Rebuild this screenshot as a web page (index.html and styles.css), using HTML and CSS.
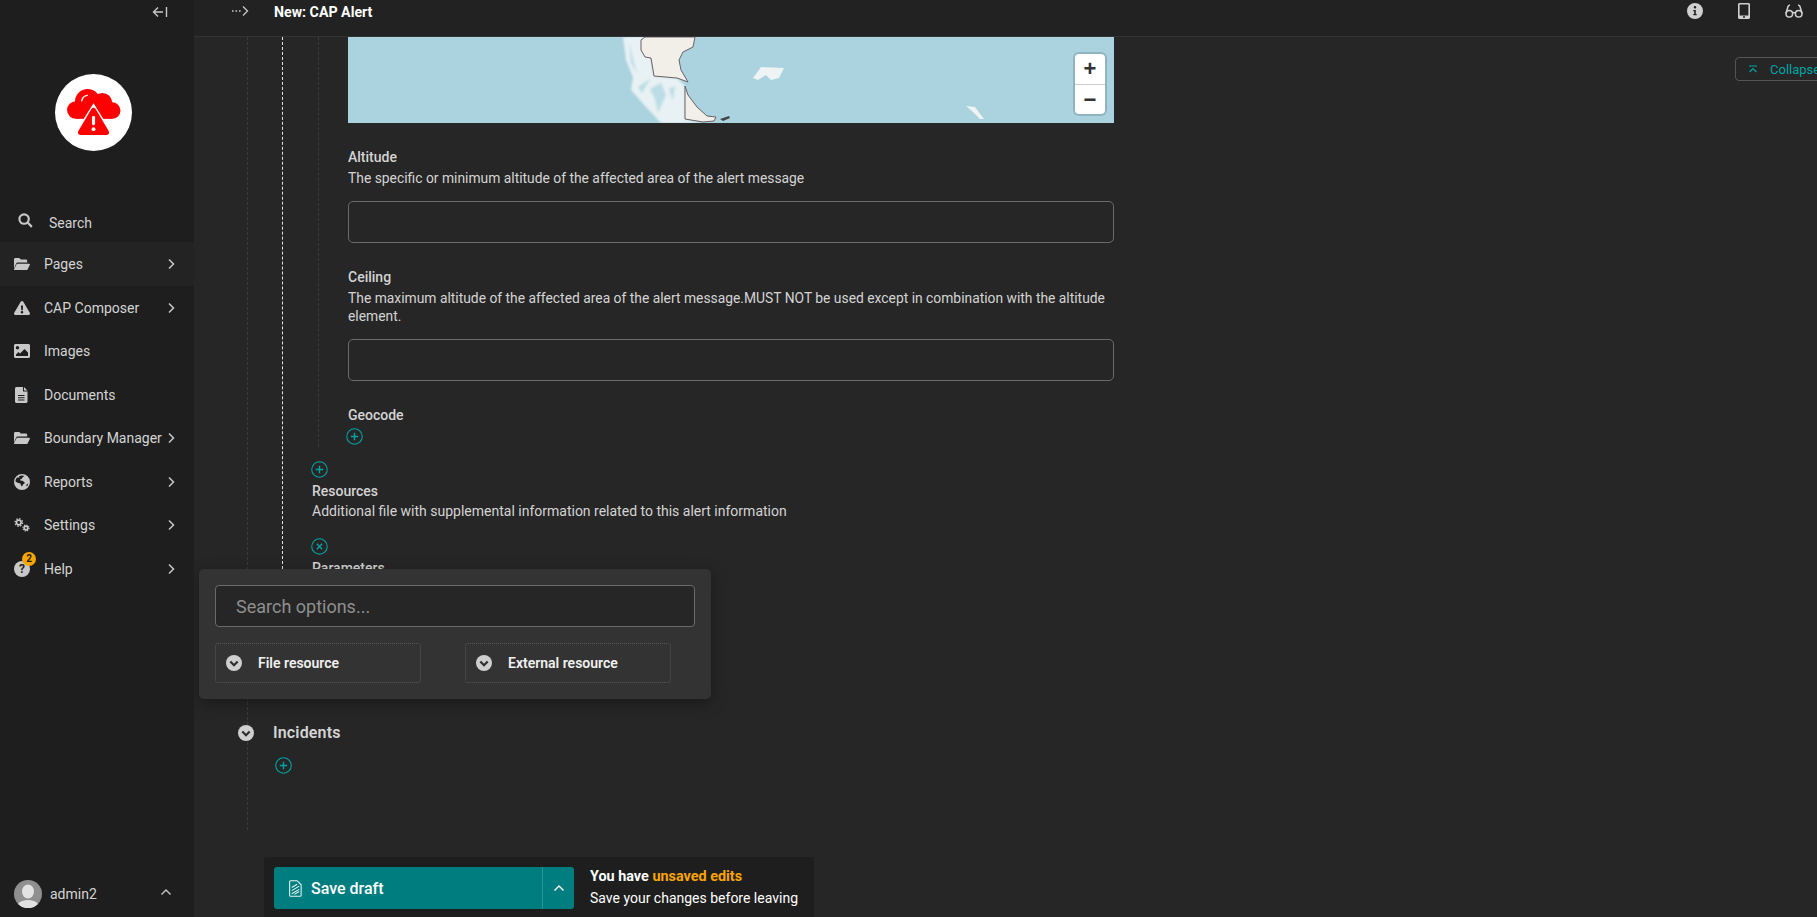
FILE: index.html
```html
<!DOCTYPE html>
<html lang="en">
<head>
<meta charset="utf-8">
<title>New: CAP Alert</title>
<link rel="stylesheet" href="styles.css">
</head>
<body>
<div class="app">
  <aside class="sidebar">
    <div class="side-toggle">
      <svg class="i-toggle" viewBox="0 0 16 12"><path d="M6 1.500 1.500 6 6 10.500M1.500 6H11M14.500 1v10"/></svg>
    </div>
    <div class="logo">
      <svg viewBox="0 0 56 48" class="logo-svg">
        <circle class="logo-red" cx="9" cy="21.500" r="9"/>
        <circle class="logo-red" cx="21" cy="13" r="13"/>
        <circle class="logo-red" cx="36" cy="14" r="10"/>
        <circle class="logo-red" cx="46" cy="22" r="8.500"/>
        <rect class="logo-red" x="9" y="15" width="37" height="15.500"/>
        <path class="logo-cut" d="M15 12c.5-3 2.500-5 5.500-5.500" />
        <path class="logo-tri-bg" d="M27 14.500 6 48h42Z"/>
        <path class="logo-red" d="M24.500 21 11.500 43c-1 2 0 4 2 4h27c2 0 3-2 2-4L29.500 21c-1.300-2.300-3.700-2.300-5 0Z"/>
        <rect class="logo-white" x="25.400" y="27.500" width="3.200" height="9.500" rx="1.500"/>
        <circle class="logo-white" cx="27" cy="41" r="2"/>
      </svg>
    </div>
    <div class="search-row">
      <svg class="i-search" viewBox="0 0 16 16"><circle cx="6.500" cy="6.500" r="5"/><path d="m10.500 10.500 4.300 4.300"/></svg>
      <span>Search</span>
    </div>
    <nav class="nav">
      <a class="nav-item active">
        <svg class="ic" viewBox="0 0 16 13"><path d="M0 11V2C0 1 .6.500 1.500.500h3.800l1.500 1.500h5c.8 0 1.400.6 1.400 1.400V5H4c-1 0-1.600.4-2 1.200Z"/><path d="M2.800 6.200h12.300c.7 0 1 .6.700 1.200l-2.200 4.600c-.2.400-.6.600-1 .6H.8c-.6 0-.9-.5-.7-1Z"/></svg>
        <span class="nav-label">Pages</span>
        <svg class="chev" viewBox="0 0 8 12"><path d="m2 1.500 4.500 4.500L2 10.500"/></svg>
      </a>
      <a class="nav-item">
        <svg class="ic" viewBox="0 0 16 14"><path fill-rule="evenodd" d="M8 0c.5 0 1 .3 1.300.8l6.500 11c.5 1-.2 2.200-1.300 2.200h-13C.4 14-.3 12.800.2 11.800l6.500-11C7 .3 7.500 0 8 0ZM7 4.500l.2 4.800h1.600L9 4.500ZM8 10a1.300 1.300 0 1 0 0 2.600A1.300 1.300 0 0 0 8 10Z"/></svg>
        <span class="nav-label">CAP Composer</span>
        <svg class="chev" viewBox="0 0 8 12"><path d="m2 1.500 4.500 4.500L2 10.500"/></svg>
      </a>
      <a class="nav-item">
        <svg class="ic" viewBox="0 0 16 14"><path fill-rule="evenodd" d="M1.500 0h13C15.300 0 16 .7 16 1.500v11c0 .8-.7 1.500-1.500 1.500h-13C.7 14 0 13.300 0 12.500v-11C0 .7.700 0 1.500 0Zm2 2a1.700 1.700 0 1 0 0 3.400 1.700 1.700 0 0 0 0-3.400ZM2 12h12V8.500L10.500 5 6 9.500 4.500 8 2 10.500Z"/></svg>
        <span class="nav-label">Images</span>
      </a>
      <a class="nav-item">
        <svg class="ic" viewBox="0 0 16 16"><path fill-rule="evenodd" d="M2.500 0H9v4.500h4.500v10c0 .8-.7 1.500-1.500 1.500H2.500C1.700 16 1 15.300 1 14.500v-13C1 .7 1.700 0 2.500 0ZM10 0l3.500 3.500H10ZM4 8v1h6.500V8Zm0 2.200v1h6.500v-1Zm0 2.200v1h6.500v-1Z"/></svg>
        <span class="nav-label">Documents</span>
      </a>
      <a class="nav-item">
        <svg class="ic" viewBox="0 0 16 13"><path d="M0 11V2C0 1 .6.500 1.500.500h3.800l1.500 1.500h5c.8 0 1.400.6 1.400 1.400V5H4c-1 0-1.600.4-2 1.200Z"/><path d="M2.800 6.200h12.300c.7 0 1 .6.700 1.200l-2.200 4.600c-.2.400-.6.600-1 .6H.8c-.6 0-.9-.5-.7-1Z"/></svg>
        <span class="nav-label">Boundary Manager</span>
        <svg class="chev" viewBox="0 0 8 12"><path d="m2 1.500 4.500 4.500L2 10.500"/></svg>
      </a>
      <a class="nav-item">
        <svg class="ic" viewBox="0 0 16 16"><path fill-rule="evenodd" d="M8 0a8 8 0 1 1 0 16A8 8 0 0 1 8 0ZM3 3.500C2 4.600 1.500 6 1.500 7.500L4 9l2.500.5.500 2 1 1 1-2 2-1.500-2-2-2.500-.5-.5-1 1.500-.5L9 3l1.500-1A6.500 6.500 0 0 0 5 2.200L5.500 3.500ZM12 11l1 1.500a6.500 6.500 0 0 0 1.300-3Z"/></svg>
        <span class="nav-label">Reports</span>
        <svg class="chev" viewBox="0 0 8 12"><path d="m2 1.500 4.500 4.500L2 10.500"/></svg>
      </a>
      <a class="nav-item">
        <svg class="ic" viewBox="0 0 16 14"><g class="gear"><circle cx="4.800" cy="4.500" r="2.300" class="gear-ring"/><circle cx="4.800" cy="4.500" r="3.700" class="gear-teeth"/></g><g class="gear"><circle cx="12" cy="10" r="1.800" class="gear-ring"/><circle cx="12" cy="10" r="3" class="gear-teeth small"/></g></svg>
        <span class="nav-label">Settings</span>
        <svg class="chev" viewBox="0 0 8 12"><path d="m2 1.500 4.500 4.500L2 10.500"/></svg>
      </a>
      <a class="nav-item">
        <span class="help-wrap">
          <svg class="ic" viewBox="0 0 16 16"><circle cx="8" cy="8" r="8"/><text x="8" y="12" class="q">?</text></svg>
          <span class="badge">2</span>
        </span>
        <span class="nav-label">Help</span>
        <svg class="chev" viewBox="0 0 8 12"><path d="m2 1.500 4.500 4.500L2 10.500"/></svg>
      </a>
    </nav>
    <div class="account">
      <svg class="avatar" viewBox="0 0 28 28"><circle cx="14" cy="14" r="14" class="av-bg"/><ellipse cx="14" cy="11.500" rx="6" ry="7" class="av-fg"/><path d="M4 24c2-3 6-4 10-4s8 1 10 4a14 14 0 0 1-20 0Z" class="av-fg"/></svg>
      <span class="account-name">admin2</span>
      <svg class="chev-up" viewBox="0 0 12 8"><path d="M1.500 6.500 6 2l4.500 4.500"/></svg>
    </div>
  </aside>

  <main class="main">
    <header class="topbar">
      <svg class="i-more" viewBox="0 0 18 12"><path class="dots" d="M1 6h1.600M4.500 6h1.600M8 6h1.600"/><path class="arr" d="m12 1.500 4.500 4.500-4.500 4.500"/></svg>
      <h1 class="title">New: CAP Alert</h1>
      <div class="top-actions">
        <svg class="top-ic" viewBox="0 0 16 16"><path fill-rule="evenodd" d="M8 0a8 8 0 1 1 0 16A8 8 0 0 1 8 0Zm0 3a1.300 1.300 0 1 0 0 2.600A1.300 1.300 0 0 0 8 3ZM6.300 7v1.200h.9v2.900h-.9v1.200h3.400v-1.200h-.9V7Z"/></svg>
        <svg class="top-ic" viewBox="0 0 16 16"><path fill-rule="evenodd" d="M3.500 0h9C13.300 0 14 .7 14 1.500v13c0 .8-.7 1.500-1.500 1.500h-9C2.700 16 2 15.300 2 14.500v-13C2 .7 2.700 0 3.500 0ZM3.600 1.600v10.800h8.800V1.600ZM8 12.900a1 1 0 1 0 0 2 1 1 0 0 0 0-2Z"/></svg>
        <svg class="top-ic glasses" viewBox="0 0 18 16"><circle cx="4.300" cy="10.800" r="3.300"/><circle cx="13.700" cy="10.800" r="3.300"/><path d="M7.500 10c1-.6 2-.6 3 0M1 10.500 3 3.500C3.300 2.500 4 2 5 2.200M17 10.500l-2-7c-.3-1-1-1.500-2-1.300"/></svg>
      </div>
    </header>

    <div class="content">
      <div class="rail-outer">
        <div class="rail-white">
          <div class="rail-inner">
            <div class="map">
              <svg class="map-svg" viewBox="0 0 766 86" preserveAspectRatio="none">
                <path class="fjord" d="M275 0H297L293 13 303 21 306 39 329 41 337 49 337 82 355 86H313L298 70 283 53 285 40 278 23Z"/>
                <path class="fjord-water" d="M281 6l4 16 4 14-6-10ZM302 52l11-6 5 12-8 18-3-14ZM290 50l12-8-8 14ZM321 52l6-3-2 14Z"/>
                <path class="land" d="M297 0H347L345 10 335 15 331 23 333 33 340 45 329 41 306 39 303 21 297 20 293 13 293 3Z"/>
                <path class="land" d="M337 49 340 58 349 70 359 79 368 80 366 84 355 85 337 82Z"/>
                <path class="island" d="M405 41 413 30 436 31 431 41 423 43 418 38 410 43Z"/>
                <path class="island" d="M618 69 627 70 636 82 632 82 625 75Z"/>
                <path class="islet" d="M372 82 381 79 382 81 375 84Z"/>
              </svg>
              <div class="zoom-ctl">
                <span class="zoom-btn">+</span>
                <span class="zoom-btn minus">−</span>
              </div>
            </div>

            <section class="field">
              <h3 class="f-label">Altitude</h3>
              <p class="f-help">The specific or minimum altitude of the affected area of the alert message</p>
              <input class="f-input" type="text">
            </section>

            <section class="field">
              <h3 class="f-label">Ceiling</h3>
              <p class="f-help">The maximum altitude of the affected area of the alert message.MUST NOT be used except in combination with the altitude element.</p>
              <input class="f-input" type="text">
            </section>

            <section class="field">
              <h3 class="f-label">Geocode</h3>
              <svg class="add geo-add" viewBox="0 0 16 16"><circle cx="8" cy="8" r="7.300"/><path d="M8 4.500v7M4.500 8h7"/></svg>
            </section>
          </div>

          <div class="block">
            <svg class="add" viewBox="0 0 16 16"><circle cx="8" cy="8" r="7.300"/><path d="M8 4.500v7M4.500 8h7"/></svg>
            <h3 class="f-label res-label">Resources</h3>
            <p class="f-help res-help">Additional file with supplemental information related to this alert information</p>
            <svg class="add close-add" viewBox="0 0 16 16"><circle cx="8" cy="8" r="7.300"/><path d="m5.500 5.500 5 5M10.500 5.500l-5 5"/></svg>
            <h3 class="f-label res-label">Parameters</h3>
          </div>
        </div>

        <div class="incidents">
          <div class="inc-head">
            <svg class="toggle-dot" viewBox="0 0 16 16"><circle cx="8" cy="8" r="8" class="dot-bg"/><path d="m4.300 6.500 3.700 3.700 3.700-3.700" class="dot-chev"/></svg>
            <h2 class="inc-title">Incidents</h2>
          </div>
          <svg class="add inc-add" viewBox="0 0 16 16"><circle cx="8" cy="8" r="7.300"/><path d="M8 4.500v7M4.500 8h7"/></svg>
        </div>
      </div>
    </div>

    <button class="collapse" type="button">
      <svg class="col-ic" viewBox="0 0 10 8"><path d="M1 1h8M1.500 7 5 3.500 8.500 7"/></svg>
      <span>Collapse</span>
    </button>

    <div class="chooser">
      <input class="chooser-search" type="text" placeholder="Search options...">
      <div class="chooser-options">
        <div class="opt">
          <svg class="toggle-dot" viewBox="0 0 16 16"><circle cx="8" cy="8" r="8" class="dot-bg"/><path d="m4.300 6.500 3.700 3.700 3.700-3.700" class="dot-chev"/></svg>
          <span>File resource</span>
        </div>
        <div class="opt">
          <svg class="toggle-dot" viewBox="0 0 16 16"><circle cx="8" cy="8" r="8" class="dot-bg"/><path d="m4.300 6.500 3.700 3.700 3.700-3.700" class="dot-chev"/></svg>
          <span>External resource</span>
        </div>
      </div>
    </div>

    <div class="savebar">
      <div class="save-btn">
        <span class="save-main">
          <svg class="save-ic" viewBox="0 0 12 16"><path d="M1.500.7h6l3.800 3.800v9.800c0 .6-.4 1-1 1H1.500c-.6 0-1-.4-1-1V1.700c0-.6.400-1 1-1Z"/><path d="m2.500 7 5-3M2.500 10l7-4.200M2.500 13l7-4.200M5 13.500l4.500-2.700"/></svg>
          <span>Save draft</span>
        </span>
        <span class="save-more"><svg class="chev-up white" viewBox="0 0 12 8"><path d="M1.500 6.500 6 2l4.500 4.500"/></svg></span>
      </div>
      <div class="save-msg">
        <div class="save-l1">You have <em>unsaved edits</em></div>
        <div class="save-l2">Save your changes before leaving</div>
      </div>
    </div>
  </main>
</div>
</body>
</html>
```
FILE: styles.css
```css
* { box-sizing: border-box; }
html, body { margin: 0; height: 100%; overflow: hidden; }
body { font-family: Roboto, "Noto Sans", sans-serif; font-size: 14px; background: #262626; color: #d4d4d4; }
.app { display: flex; height: 917px; }

.sidebar { width: 194px; flex: none; background: #1e1e1e; display: flex; flex-direction: column; }
.side-toggle { height: 24px; display: flex; justify-content: flex-end; align-items: center; padding-right: 26px; }
.i-toggle { width: 16px; height: 12px; fill: none; stroke: #c8c8c8; stroke-width: 1.400; }
.logo { height: 176px; display: flex; align-items: center; justify-content: center; padding-right: 7px; position: relative; }
.logo::before { content: ""; width: 77px; height: 77px; border-radius: 50%; background: #fff; }
.logo-svg { width: 55px; height: 47px; position: absolute; left: 67px; top: 65px; }
.logo-red { fill: #f00; }
.logo-cut { fill: none; stroke: #fff; stroke-width: 1.500; stroke-linecap: round; }
.logo-tri-bg { fill: #fff; }
.logo-white { fill: #fff; }

.search-row { height: 42px; display: flex; align-items: center; padding-left: 18px; gap: 16px; padding-top: 4px; color: #d4d4d4; }
.i-search { width: 15px; height: 15px; margin-top: -6px; fill: none; stroke: #c8c8c8; stroke-width: 2.300; }
.nav { display: flex; flex-direction: column; }
.nav-item { height: 43.500px; display: flex; align-items: center; padding-left: 14px; padding-top: 1px; color: #d4d4d4; }
.nav-item.active { background: #232323; }
.ic { width: 16px; height: 16px; fill: #c8c8c8; flex: none; }
.nav-label { margin-left: 14px; flex: 1; white-space: nowrap; }
.chev { width: 8px; height: 12px; fill: none; stroke: #c8c8c8; stroke-width: 1.500; margin-right: 19px; flex: none; }
.gear { fill: none; stroke: #c8c8c8; }
.gear-ring { stroke-width: 1.700; }
.gear-teeth { stroke-width: 1.400; stroke-dasharray: 1.450 1.450; }
.gear-teeth.small { stroke-width: 1.200; stroke-dasharray: 1.180 1.180; }
.q { font-family: Roboto, sans-serif; font-size: 12px; font-weight: 700; fill: #1e1e1e; text-anchor: middle; }
.help-wrap { position: relative; display: flex; }
.badge { position: absolute; left: 8px; top: -9px; width: 14px; height: 14px; border-radius: 50%; background: #faa500; color: #1e1e1e; font-size: 10px; font-weight: 700; display: flex; align-items: center; justify-content: center; }
.account { margin-top: auto; height: 46px; display: flex; align-items: center; padding-left: 14px; }
.avatar { width: 28px; height: 28px; flex: none; }
.av-bg { fill: #8f8f8f; }
.av-fg { fill: #e2e2e2; }
.account-name { margin-left: 8px; font-size: 14px; flex: 1; }
.chev-up { width: 12px; height: 8px; fill: none; stroke: #c8c8c8; stroke-width: 1.400; margin-right: 22px; margin-bottom: 4px; }

.main { flex: 1; min-width: 0; position: relative; display: flex; flex-direction: column; height: 917px; overflow: hidden; }
.topbar { height: 37px; flex: none; background: #222; border-bottom: 1px solid #333; display: flex; align-items: center; padding: 0 0 13px 37px; }
.i-more { width: 18px; height: 12px; fill: none; margin-top: -2px; }
.dots { stroke: #c8c8c8; stroke-width: 1.600; }
.arr { stroke: #c8c8c8; stroke-width: 1.300; }
.title { margin: 0 0 0 25px; font-size: 14.200px; font-weight: 700; color: #fff; }
.top-actions { margin-left: auto; display: flex; gap: 33px; padding-right: 14px; margin-top: -2px; }
.top-ic { width: 16px; height: 16px; fill: #d0d0d0; }
.glasses { fill: none; stroke: #d0d0d0; stroke-width: 1.500; width: 18px; }

.content { flex: 1; padding-left: 53px; overflow: hidden; }
.rail-outer { border-left: 1px dashed #3b3b3b; height: 793px; }
.rail-white { margin-left: 34px; border-left: 1px dashed #e4e4e4; height: 532px; overflow: hidden; }
.rail-inner { margin-left: 35px; border-left: 1px dashed #3b3b3b; padding-left: 29px; height: 410px; width: 797px; }
.map { width: 766px; height: 86px; background: #aad3df; position: relative; }
.map-svg { display: block; width: 100%; height: 100%; }
.land { fill: #f2efe9; stroke: #6b6068; stroke-width: 1; }
.fjord { fill: #e8f1f3; filter: blur(.8px); }
.fjord-water { fill: #bcdde6; filter: blur(.8px); }
.island { fill: #eef3f3; filter: blur(.5px); }
.islet { fill: #444; }
.zoom-ctl { position: absolute; left: 727px; top: 17px; width: 30px; height: 60px; background: #fff; border-radius: 4px; box-shadow: 0 0 0 2px rgba(0,0,0,.15); display: flex; flex-direction: column; }
.zoom-btn { height: 30px; display: flex; align-items: center; justify-content: center; font: 700 22px "Liberation Sans", sans-serif; color: #333; }
.zoom-btn.minus { border-top: 1px solid #ccc; }

.field { width: 766px; padding-top: 24px; }
.f-label { margin: 0; font-size: 14px; line-height: 20px; font-weight: 500; color: #d4d4d4; }
.f-help { margin: 2px 0 0; font-size: 13.850px; line-height: 18.500px; color: #d4d4d4; }
.f-input { display: block; width: 766px; height: 42px; margin-top: 13px; background: #262626; border: 1px solid #6a6a6a; border-radius: 5px; }
.add { display: block; width: 17px; height: 17px; fill: none; stroke: #00a5a6; stroke-width: 1; }
.add path { stroke-width: 1.300; }
.geo-add { margin-left: -2px; margin-top: 3px; }
.block { margin-left: 29px; padding-top: 14px; width: 800px; }
.block .add { margin-left: -1px; }
.res-label { margin-top: 3px; }
.block .res-help { margin-top: 1px; font-size: 14px; }
.block .close-add { margin-top: 17px; margin-bottom: 2px; }

.inc-head { display: flex; align-items: center; margin-left: -10px; margin-top: 153px; gap: 12px; }
.inc-title { margin: 0 0 0 7px; font-size: 16px; font-weight: 600; letter-spacing: .15px; color: #d4d4d4; line-height: 22px; }
.toggle-dot { width: 16px; height: 16px; flex: none; }
.dot-bg { fill: #cfcfcf; }
.dot-chev { fill: none; stroke: #2e2e2e; stroke-width: 2.200; }
.inc-add { margin-left: 27px; margin-top: 13px; }

.collapse { position: absolute; left: 1541px; top: 57px; width: 120px; height: 24px; background: transparent; border: 1px solid #555; border-radius: 4px; display: flex; align-items: center; padding: 0 0 0 12px; gap: 12px; font: 13px Roboto, sans-serif; color: #00a5a6; }
.col-ic { width: 10px; height: 8px; fill: none; stroke: #00a5a6; stroke-width: 1.200; flex: none; }

.chooser { position: absolute; left: 5px; top: 569px; width: 512px; height: 130px; background: #333; border-radius: 5px; padding: 16px; box-shadow: 0 4px 16px rgba(0,0,0,.35); }
.chooser-search { display: block; width: 480px; height: 42px; background: #262626; border: 1px solid #6a6a6a; border-radius: 4px; padding: 0 20px; font: 18px Roboto, sans-serif; color: #ccc; }
.chooser-search::placeholder { color: #8f8f8f; opacity: 1; }
.chooser-options { display: flex; gap: 44px; margin-top: 16px; }
.opt { width: 206px; height: 40px; border: 1px dotted #575757; border-radius: 3px; display: flex; align-items: center; padding-left: 10px; gap: 16px; font-size: 14px; font-weight: 600; color: #f0f0f0; }

.savebar { position: absolute; left: 70px; top: 857px; width: 550px; height: 60px; background: #1e1e1e; border-radius: 3px 3px 0 0; padding: 10px; display: flex; gap: 16px; }
.save-btn { width: 300px; height: 42px; background: #007d7e; border-radius: 3px; display: flex; color: #fff; }
.save-main { flex: 1; display: flex; align-items: center; padding-left: 15px; gap: 9px; font-size: 16px; font-weight: 500; }
.save-ic { width: 13px; height: 17px; fill: none; stroke: #e9f4f4; stroke-width: 1; }
.save-more { width: 32px; border-left: 1px solid #2a9596; display: flex; align-items: center; justify-content: center; }
.chev-up.white { margin: 0; stroke: #fff; }
.save-msg { font-size: 14px; line-height: 20.500px; color: #fff; }
.save-l1 { font-size: 14.400px; font-weight: 700; }
.save-l1 em { font-style: normal; color: #faa500; }
```
